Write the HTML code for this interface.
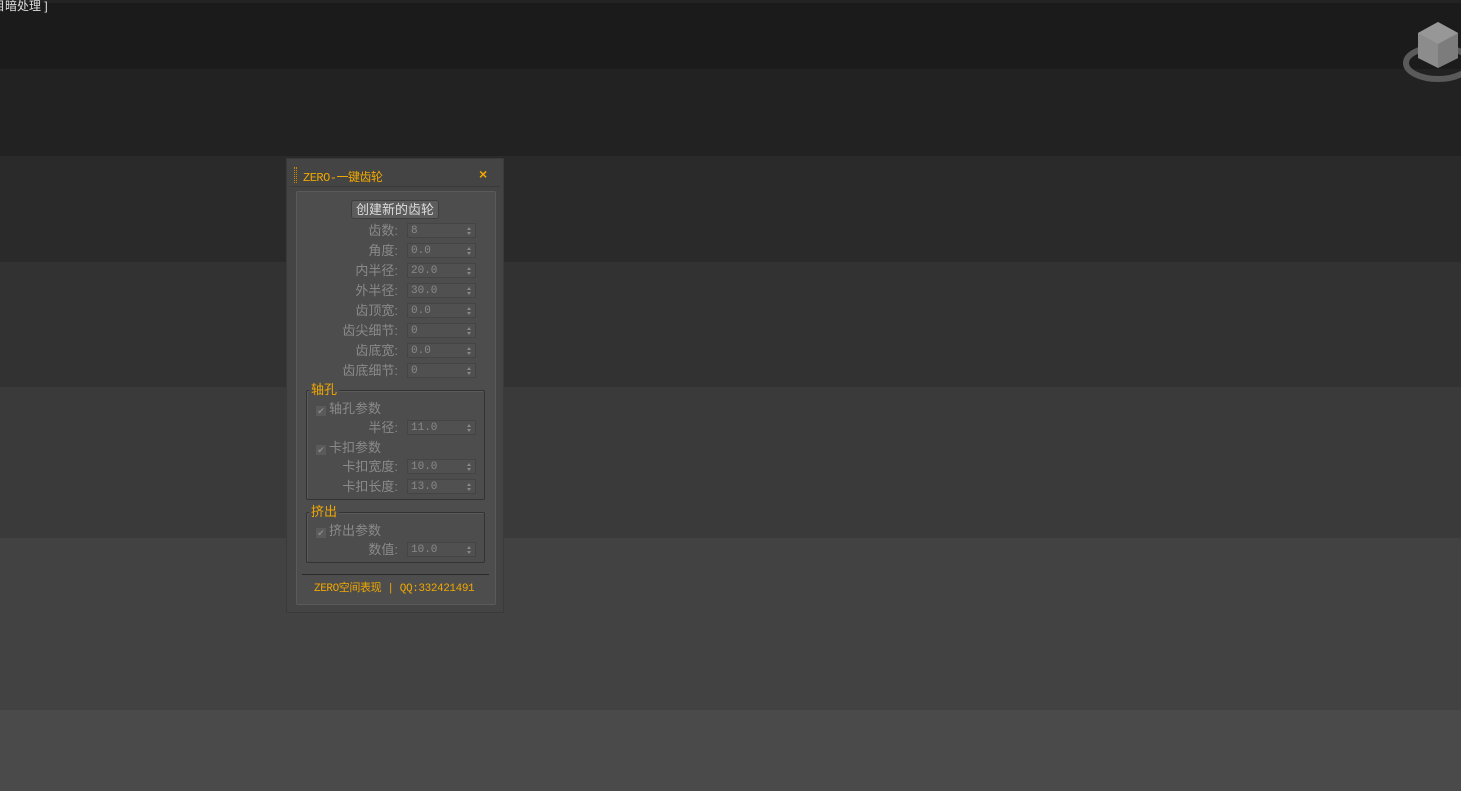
<!DOCTYPE html>
<html><head><meta charset="utf-8"><style>
*{margin:0;padding:0;box-sizing:border-box}
body{width:1461px;height:791px;overflow:hidden;position:relative;font-family:"Liberation Sans","Noto Sans CJK SC",sans-serif;font-size:12px;background:#4a4a4a}
.b{position:absolute;left:0;width:1461px}
.ab{position:absolute}
.dlg{left:286px;top:158px;width:218px;height:455px;background:#444;border:1px solid #3a3a3a}
.panel{left:296px;top:191px;width:200px;height:414px;background:#4d4d4d;border:1px solid #5a5a5a;border-radius:2px}
.lbl{position:absolute;width:120px;text-align:right;color:#8a8a8a;font-size:13px;line-height:14px}
.sp{position:absolute;width:69px;height:15px;background:#505050;border:1px solid #444;color:#8a8a8a;font-family:"Liberation Mono",monospace;font-size:11px;line-height:15px;padding-left:3px}
.sp:after{content:"";position:absolute;right:4px;top:3px;width:0;height:0;border-left:2px solid transparent;border-right:2px solid transparent;border-bottom:3px solid #888}
.sp:before{content:"";position:absolute;right:4px;top:8px;width:0;height:0;border-left:2px solid transparent;border-right:2px solid transparent;border-top:3px solid #888}
.grp{position:absolute;border:1px solid #333;border-radius:2px;box-shadow:inset 1px 1px 0 #5a5a5a}
.gt{position:absolute;color:#f0a800;font-size:13px;background:#4d4d4d;padding:0 2px;line-height:14px}
.cb{position:absolute;color:#8a8a8a;line-height:14px;font-size:13px}
.cb i{display:inline-block;width:10px;height:10px;background:#5a5a5a;margin-right:3px;font-style:normal;font-size:9px;line-height:10px;color:#888;text-align:center;vertical-align:-1px}
</style></head><body>
<div class="b" style="top:0;height:69px;background:#1b1b1b"></div>
<div class="b" style="top:0;height:3px;background:#232323"></div>
<div class="b" style="top:69px;height:87px;background:#222"></div>
<div class="b" style="top:156px;height:106px;background:#2a2a2a"></div>
<div class="b" style="top:262px;height:125px;background:#323232"></div>
<div class="b" style="top:387px;height:151px;background:#3a3a3a"></div>
<div class="b" style="top:538px;height:172px;background:#424242"></div>
<div class="b" style="top:710px;height:81px;background:#4a4a4a"></div>
<div class="ab" style="left:-7px;top:-3px;color:#ddd;font-size:12px">目暗处理 ]</div>
<svg class="ab" style="left:1400px;top:18px" width="61" height="68" viewBox="0 0 61 68">
<ellipse cx="38" cy="45" rx="32" ry="16" fill="none" stroke="#5a5a5a" stroke-width="6"/>
<polygon points="38,4 58,15 58,40 38,50 18,40 18,15" fill="#8c8c8c"/>
<polygon points="38,26 58,15 58,40 38,50" fill="#7c7c7c"/>
<polygon points="18,15 38,4 58,15 38,26" fill="#979797"/>
</svg>
<div class="ab dlg"></div>
<div class="ab" style="left:294px;top:167px;width:3px;height:16px;border-left:1px dotted #c98a00;border-right:1px dotted #c98a00"></div>
<div class="ab" style="left:303px;top:168px;color:#f0a800;font-size:12px;font-family:'Liberation Mono','Noto Sans CJK SC',monospace;letter-spacing:-0.5px">ZERO-一键齿轮</div>
<div class="ab" style="left:479px;top:166px;color:#f0a800;font-size:14px;font-weight:bold">×</div>
<div class="ab" style="left:290px;top:186px;width:210px;height:1px;background:#3a3a3a"></div>
<div class="ab panel"></div>
<div class="ab" style="left:351px;top:200px;width:88px;height:19px;background:#5c5c5c;border:1px solid #3e3e3e;border-radius:3px;color:#ddd;text-align:center;line-height:17px;font-size:13px">创建新的齿轮</div>

<div class="lbl" style="left:278px;top:224px">齿数:</div><div class="sp" style="left:407px;top:223px">8</div>
<div class="lbl" style="left:278px;top:244px">角度:</div><div class="sp" style="left:407px;top:243px">0.0</div>
<div class="lbl" style="left:278px;top:264px">内半径:</div><div class="sp" style="left:407px;top:263px">20.0</div>
<div class="lbl" style="left:278px;top:284px">外半径:</div><div class="sp" style="left:407px;top:283px">30.0</div>
<div class="lbl" style="left:278px;top:304px">齿顶宽:</div><div class="sp" style="left:407px;top:303px">0.0</div>
<div class="lbl" style="left:278px;top:324px">齿尖细节:</div><div class="sp" style="left:407px;top:323px">0</div>
<div class="lbl" style="left:278px;top:344px">齿底宽:</div><div class="sp" style="left:407px;top:343px">0.0</div>
<div class="lbl" style="left:278px;top:364px">齿底细节:</div><div class="sp" style="left:407px;top:363px">0</div>

<div class="grp" style="left:306px;top:390px;width:179px;height:110px"></div>
<div class="gt" style="left:309px;top:383px">轴孔</div>
<div class="cb" style="left:316px;top:402px"><i>✔</i>轴孔参数</div>
<div class="lbl" style="left:278px;top:421px">半径:</div><div class="sp" style="left:407px;top:420px">11.0</div>
<div class="cb" style="left:316px;top:441px"><i>✔</i>卡扣参数</div>
<div class="lbl" style="left:278px;top:460px">卡扣宽度:</div><div class="sp" style="left:407px;top:459px">10.0</div>
<div class="lbl" style="left:278px;top:480px">卡扣长度:</div><div class="sp" style="left:407px;top:479px">13.0</div>

<div class="grp" style="left:306px;top:512px;width:179px;height:51px"></div>
<div class="gt" style="left:309px;top:505px">挤出</div>
<div class="cb" style="left:316px;top:524px"><i>✔</i>挤出参数</div>
<div class="lbl" style="left:278px;top:543px">数值:</div><div class="sp" style="left:407px;top:542px">10.0</div>

<div class="ab" style="left:302px;top:574px;width:187px;height:1px;background:#2a2a2a"></div>
<div class="ab" style="left:314px;top:579px;color:#f0a800;font-size:11px;letter-spacing:-0.4px;font-family:'Liberation Mono','Noto Sans CJK SC',monospace">ZERO空间表现 | QQ:332421491</div>
</body></html>
